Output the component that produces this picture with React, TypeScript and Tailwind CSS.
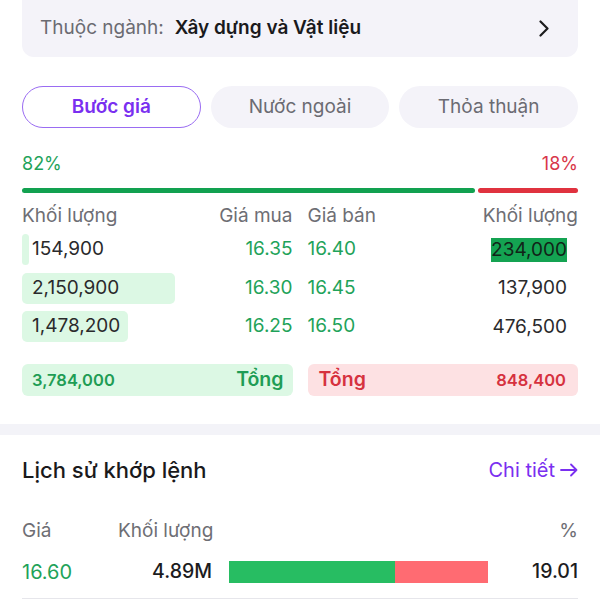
import { clsx } from 'clsx'

const bids = [
  { vol: '154,900', price: '16.35', w: 7 },
  { vol: '2,150,900', price: '16.30', w: 153 },
  { vol: '1,478,200', price: '16.25', w: 106 },
]

const asks = [
  { vol: '234,000', price: '16.40', flash: true },
  { vol: '137,900', price: '16.45', flash: false },
  { vol: '476,500', price: '16.50', flash: false },
]

const tabs = ['Bước giá', 'Nước ngoài', 'Thỏa thuận']

function Chevron() {
  return (
    <svg width="12" height="17" viewBox="0 0 12 17" fill="none" className="text-[#1c1c1e]">
      <path d="M2.5 1.5 L9.5 8.5 L2.5 15.5" stroke="currentColor" strokeWidth="2.2" strokeLinecap="round" strokeLinejoin="round" />
    </svg>
  )
}

function Arrow() {
  return (
    <svg width="18" height="14" viewBox="0 0 18 14" fill="none">
      <path d="M1 7 H16.5 M11 1.5 L16.5 7 L11 12.5" stroke="currentColor" strokeWidth="1.8" strokeLinecap="round" strokeLinejoin="round" />
    </svg>
  )
}

export default function App() {
  return (
    <main className="w-[600px] h-[600px] overflow-hidden bg-white font-['Inter','Noto_Sans',sans-serif] text-[#1c1c1e]">
      <div className="px-[22px]">
        {/* Ngành */}
        <div className="h-[57px] rounded-b-xl bg-[#f4f3f9] flex items-center pl-[18px] pr-[28px] text-[19px]">
          <span className="text-[#6b6b72]">Thuộc ngành:</span>
          <span className="ml-[11px] font-semibold text-[#1a1a1c]">Xây dựng và Vật liệu</span>
          <span className="ml-auto flex items-center">
            <Chevron />
          </span>
        </div>

        {/* Tabs */}
        <div className="mt-[29px] grid grid-cols-3 gap-[10px]">
          {tabs.map((t, i) => (
            <div
              key={t}
              className={clsx(
                'h-[42px] rounded-full flex items-center justify-center text-[19px]',
                i === 0
                  ? 'border-[1.5px] border-[#9a6cf2] text-[#7a2ff0] font-semibold'
                  : 'bg-[#f4f3f9] text-[#6b6b72]'
              )}
            >
              {t}
            </div>
          ))}
        </div>

        {/* Tỉ lệ mua bán */}
        <div className="mt-[26px] flex justify-between text-[18px] leading-[20px]">
          <span className="text-[#1fa35a]">82%</span>
          <span className="text-[#d8364a]">18%</span>
        </div>
        <div className="mt-[14px] flex gap-[3px] h-[5px]">
          <div className="flex-[82] rounded-full bg-[#12a150]" />
          <div className="flex-[18] rounded-full bg-[#e0323f]" />
        </div>

        {/* Sổ lệnh */}
        <div className="mt-[12px] grid grid-cols-2 gap-x-[15px] text-[19px] leading-[22px] text-[#6e6e74]">
          <div className="flex justify-between">
            <span>Khối lượng</span>
            <span>Giá mua</span>
          </div>
          <div className="flex justify-between">
            <span>Giá bán</span>
            <span>Khối lượng</span>
          </div>
        </div>

        <div className="mt-[7px] flex flex-col gap-[7.5px]">
          {bids.map((b, i) => (
            <div key={b.price} className="grid grid-cols-2 gap-x-[15px] h-[31px] text-[19px]">
              <div className="relative flex items-center justify-between">
                <div
                  className="absolute left-0 top-0 bottom-0 rounded-[5px] bg-[#dcf8e4]"
                  style={{ width: b.w }}
                />
                <span className="relative pl-[10px] text-[#2a2a2c]">{b.vol}</span>
                <span className="relative text-[#1fa35a]">{b.price}</span>
              </div>
              <div className="flex items-center justify-between">
                <span className="text-[#1fa35a]">{asks[i].price}</span>
                <span
                  className={clsx(
                    'mr-[11px] text-[#2a2a2c] leading-[24px]',
                    asks[i].flash && 'bg-[#14a352] text-[#112418]'
                  )}
                >
                  {asks[i].vol}
                </span>
              </div>
            </div>
          ))}
        </div>

        {/* Tổng */}
        <div className="mt-[22px] grid grid-cols-2 gap-x-[15px]">
          <div className="h-[32px] rounded-[6px] bg-[#dcf8e4] flex items-center justify-between pl-[10px] pr-[9px]">
            <span className="text-[16.5px] font-semibold text-[#1f9d55]">3,784,000</span>
            <span className="text-[19.5px] font-semibold text-[#1f9d55]">Tổng</span>
          </div>
          <div className="h-[32px] rounded-[6px] bg-[#fde1e3] flex items-center justify-between pl-[11px] pr-[12px]">
            <span className="text-[19.5px] font-semibold text-[#d6323f]">Tổng</span>
            <span className="text-[16.5px] font-semibold text-[#d6323f]">848,400</span>
          </div>
        </div>
      </div>

      <div className="mt-[28px] h-[11px] bg-[#f3f3f8]" />

      {/* Lịch sử khớp lệnh */}
      <section className="px-[22px]">
        <div className="mt-[21px] h-[28px] flex items-center justify-between">
          <h2 className="text-[22px] font-medium text-[#1a1a1c]">Lịch sử khớp lệnh</h2>
          <button className="flex items-center gap-[5px] text-[20px] text-[#7a2ff0]">
            Chi tiết
            <Arrow />
          </button>
        </div>

        <div className="mt-[36px] flex items-center h-[22px] text-[19px] text-[#6e6e74]">
          <span className="w-[96px]">Giá</span>
          <span>Khối lượng</span>
          <span className="ml-auto">%</span>
        </div>

        <div className="mt-[19px] pb-[15px] border-b border-[#e6e6eb] flex items-start h-[38px]">
          <div className="flex items-center h-[22px] w-full">
            <span className="w-[80px] text-[20px] text-[#1fa35a]">16.60</span>
            <span className="w-[110px] text-right text-[19.5px] font-medium text-[#1c1c1e]">4.89M</span>
            <div className="ml-[17px] flex h-[22px] w-[259px]">
              <div className="w-[166px] bg-[#27bd62]" />
              <div className="flex-1 bg-[#ff6b72]" />
            </div>
            <span className="ml-auto text-[19.5px] font-medium text-[#1c1c1e]">19.01</span>
          </div>
        </div>
      </section>
    </main>
  )
}
